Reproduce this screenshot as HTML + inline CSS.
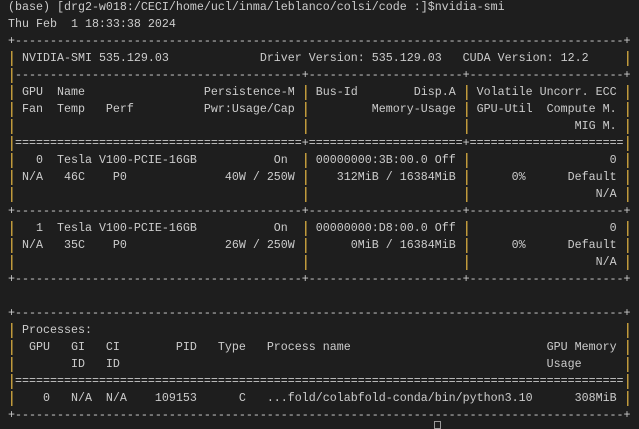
<!DOCTYPE html>
<html><head><meta charset="utf-8"><style>
html,body{margin:0;padding:0;background:#1e1e1e;width:639px;height:427px;overflow:hidden}
pre{margin:0;position:absolute;left:8px;top:-1px;font-family:"Liberation Mono",monospace;font-size:11.6667px;line-height:17px;color:#cccccc;white-space:pre}
b{font-weight:normal;color:transparent;display:inline-block;width:7px;height:17px;vertical-align:top;background:linear-gradient(#c09a3c,#c09a3c) no-repeat 3px 1px/1.5px 15px}
.cur{position:absolute;left:434px;top:421px;width:7px;height:8px;border:1px solid #999;box-sizing:border-box}
</style></head><body>
<pre id="t">(base) [drg2-w018:/CECI/home/ucl/inma/leblanco/colsi/code :]$nvidia-smi
Thu Feb  1 18:33:38 2024
+---------------------------------------------------------------------------------------+
| NVIDIA-SMI 535.129.03             Driver Version: 535.129.03   CUDA Version: 12.2     |
|-----------------------------------------+----------------------+----------------------+
| GPU  Name                 Persistence-M | Bus-Id        Disp.A | Volatile Uncorr. ECC |
| Fan  Temp   Perf          Pwr:Usage/Cap |         Memory-Usage | GPU-Util  Compute M. |
|                                         |                      |               MIG M. |
|=========================================+======================+======================|
|   0  Tesla V100-PCIE-16GB           On  | 00000000:3B:00.0 Off |                    0 |
| N/A   46C    P0              40W / 250W |    312MiB / 16384MiB |      0%      Default |
|                                         |                      |                  N/A |
+-----------------------------------------+----------------------+----------------------+
|   1  Tesla V100-PCIE-16GB           On  | 00000000:D8:00.0 Off |                    0 |
| N/A   35C    P0              26W / 250W |      0MiB / 16384MiB |      0%      Default |
|                                         |                      |                  N/A |
+-----------------------------------------+----------------------+----------------------+

+---------------------------------------------------------------------------------------+
| Processes:                                                                            |
|  GPU   GI   CI        PID   Type   Process name                            GPU Memory |
|        ID   ID                                                             Usage      |
|=======================================================================================|
|    0   N/A  N/A    109153      C   ...fold/colabfold-conda/bin/python3.10      308MiB |
+---------------------------------------------------------------------------------------+</pre>
<div class="cur"></div>
<script>
var t=document.getElementById('t');t.innerHTML=t.innerHTML.replace(/\|/g,'<b>|</b>');
</script>
</body></html>
